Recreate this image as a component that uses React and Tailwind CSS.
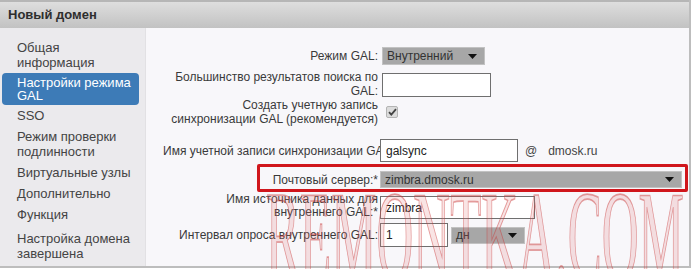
const navItems = [
  { label: ["Общая", "информация"] },
  { label: ["Настройки режима", "GAL"], active: true },
  { label: ["SSO"] },
  { label: ["Режим проверки", "подлинности"] },
  { label: ["Виртуальные узлы"] },
  { label: ["Дополнительно"] },
  { label: ["Функция"] },
  { label: ["Настройка домена", "завершена"] },
];

function Arrow() {
  return (
    <svg width="9" height="5" viewBox="0 0 9 5" className="shrink-0">
      <path d="M0 0h9L4.5 5z" fill="#111" />
    </svg>
  );
}

function Select({ value, className }) {
  return (
    <div
      className={`flex items-center justify-between pl-[4px] pr-[7px] bg-[#a7a7a7] border border-[#c2c2c2] text-[#333] ${className}`}
    >
      <span>{value}</span>
      <Arrow />
    </div>
  );
}

function Input({ value, className }) {
  return (
    <div
      className={`flex items-center pl-[5px] bg-white border border-[#6f6f6f] text-[#222] ${className}`}
    >
      {value}
    </div>
  );
}

function Label({ children, className = "" }) {
  return (
    <div
      className={`w-[234px] shrink-0 pl-[17px] pr-[2px] text-right whitespace-nowrap text-[#3a3a3a] ${className}`}
    >
      {children}
    </div>
  );
}

export default function App() {
  return (
    <div className="relative w-[692px] h-[269px] overflow-hidden bg-white font-['Liberation_Sans',Arial,sans-serif] text-[12px]">
      <div className="w-[691px] h-[268px] flex flex-col border-r-2 border-b-2 border-[#bdbdbd]">
        {/* title bar */}
        <div className="h-[28px] shrink-0 flex items-center pl-[8px] border-t-2 border-[#b6b6b6] bg-gradient-to-b from-[#dedede] to-[#c2c2c2]">
          <span className="font-bold text-[#2e2e2e] text-[13px]">Новый домен</span>
        </div>

        <div className="flex flex-1 min-h-0">
          {/* sidebar */}
          <div className="w-[146px] shrink-0 bg-[#ebeaed] pt-[9px] border-r border-[#e2e1e4]">
            {navItems.map((item, i) =>
              item.active ? (
                <div
                  key={i}
                  className="ml-[2px] w-[137px] rounded-[4px] bg-[#3d7bb7] text-white pl-[15px] py-[3px] leading-[13px] text-[13px]"
                >
                  {item.label.map((l) => (
                    <div key={l}>{l}</div>
                  ))}
                </div>
              ) : (
                <div key={i} className="pl-[17px] py-[3px] leading-[15px] text-[13px] text-[#444] last:mt-[3px]">
                  {item.label.map((l) => (
                    <div key={l}>{l}</div>
                  ))}
                </div>
              )
            )}
          </div>

          {/* form */}
          <div className="flex-1 bg-[#f8f7fa] flex flex-col">
            <div className="flex items-center h-[18px] mt-[19px]">
              <Label>Режим GAL:</Label>
              <Select value="Внутренний" className="ml-[2px] w-[103px] h-[18px]" />
            </div>

            <div className="flex items-start mt-[5px]">
              <Label className="leading-[14px]">
                Большинство результатов поиска по
                <br />
                GAL:
              </Label>
              <Input value="" className="ml-[2px] mt-[3px] w-[109px] h-[24px]" />
            </div>

            <div className="flex items-center">
              <Label className="leading-[14px]">
                Создать учетную запись
                <br />
                синхронизации GAL (рекомендуется)
              </Label>
              <div className="ml-[6px] w-[12px] h-[12px] rounded-[2px] bg-[#dcdcdc] border border-[#b4b4b4] flex items-center justify-center">
                <svg width="9" height="8" viewBox="0 0 9 8">
                  <path d="M1 4.2l2.3 2.4L8 1.2" stroke="#444" strokeWidth="1.8" fill="none" />
                </svg>
              </div>
            </div>

            <div className="flex items-center mt-[13px]">
              <Label className="overflow-hidden text-left pr-0">
                Имя учетной записи синхронизации GAL:
              </Label>
              <Input value="galsync" className="w-[138px] h-[23px]" />
              <span className="ml-[7px] text-[#444]">@</span>
              <span className="ml-[11px] text-[#444]">dmosk.ru</span>
            </div>

            <div className="flex items-center h-[17px] mt-[9px]">
              <Label>Почтовый сервер:*</Label>
              <Select value="zimbra.dmosk.ru" className="w-[302px] h-[17px]" />
            </div>

            <div className="flex items-start mt-[5px]">
              <Label className="leading-[13px]">
                Имя источника данных для
                <br />
                внутреннего GAL:*
              </Label>
              <Input value="zimbra" className="mt-[3px] w-[155px] h-[23px]" />
            </div>

            <div className="flex items-center mt-[4px]">
              <Label>Интервал опроса внутреннего GAL:</Label>
              <Input value="1" className="w-[68px] h-[24px]" />
              <Select value="дн" className="ml-[3px] w-[74px] h-[17px]" />
            </div>
          </div>
        </div>
      </div>

      {/* red highlight annotation */}
      <div className="absolute left-[257px] top-[164px] w-[431px] h-[28px] border-[3px] border-[#d0161c] rounded-[2px] pointer-events-none" />

      {/* watermark */}
      <div className="absolute left-[266px] top-[174px] origin-top-left scale-y-[2.5] pointer-events-none whitespace-nowrap leading-none font-['Liberation_Serif',serif] text-[51px] text-[rgba(225,120,120,0.2)] [-webkit-text-stroke:0.7px_rgba(200,50,50,0.45)]">
        REMONTKA.COM
      </div>
    </div>
  );
}
